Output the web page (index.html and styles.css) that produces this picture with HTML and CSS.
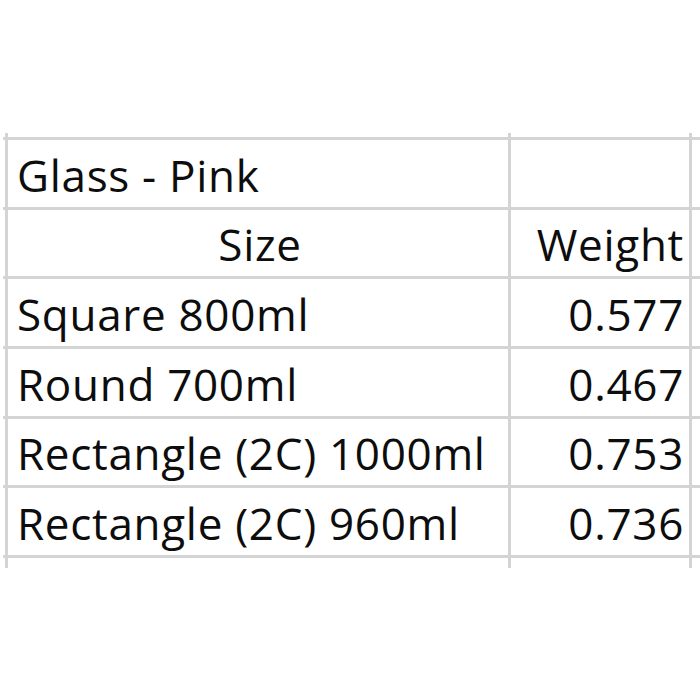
FILE: index.html
```html
<!DOCTYPE html>
<html lang="en">
<head>
<meta charset="utf-8">
<title>Glass - Pink</title>
<link rel="stylesheet" href="styles.css">
</head>
<body>
<div class="sheet">
  <div class="cell"></div><div class="cell"></div><div class="cell"></div><div class="cell"></div>

  <div class="cell"></div><div class="cell text">Glass - Pink</div><div class="cell"></div><div class="cell"></div>
  <div class="cell"></div><div class="cell text center">Size</div><div class="cell text right">Weight</div><div class="cell"></div>
  <div class="cell"></div><div class="cell text">Square 800ml</div><div class="cell text right">0.577</div><div class="cell"></div>
  <div class="cell"></div><div class="cell text">Round 700ml</div><div class="cell text right">0.467</div><div class="cell"></div>
  <div class="cell"></div><div class="cell text">Rectangle (2C) 1000ml</div><div class="cell text right">0.753</div><div class="cell"></div>
  <div class="cell"></div><div class="cell text">Rectangle (2C) 960ml</div><div class="cell text right">0.736</div><div class="cell"></div>

  <div class="cell"></div><div class="cell"></div><div class="cell"></div><div class="cell"></div>
</div>
</body>
</html>
```
FILE: styles.css
```css
html, body {
  margin: 0;
  padding: 0;
  background: #ffffff;
}

body {
  width: 700px;
  height: 700px;
  overflow: hidden;
  padding-top: 133px;
  padding-left: 3px;
  box-sizing: border-box;
}

.sheet {
  display: grid;
  grid-template-columns: 2px 500px 178px 1fr;
  grid-template-rows: 4px repeat(6, 66.67px) 10px;
  gap: 3px;
  background: #d4d4d4;
  font-family: "Open Sans", "Lato", sans-serif;
  font-size: 44px;
  font-weight: 500;
  letter-spacing: 0.7px;
  color: #0d0d0d;
}

.cell {
  background: #ffffff;
}

.text {
  display: flex;
  align-items: flex-end;
  padding: 0 5px 10px 9px;
  line-height: 1;
  white-space: nowrap;
}

.center {
  justify-content: center;
}

.right {
  justify-content: flex-end;
}
```
